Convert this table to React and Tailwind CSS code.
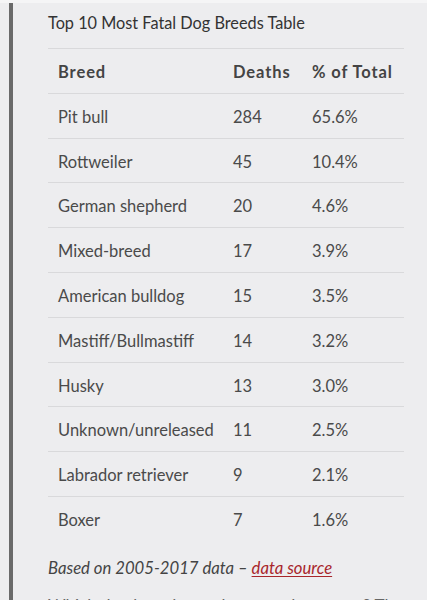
import React from 'react';

const rows = [
    ['Pit bull', '284', '65.6%'],
    ['Rottweiler', '45', '10.4%'],
    ['German shepherd', '20', '4.6%'],
    ['Mixed-breed', '17', '3.9%'],
    ['American bulldog', '15', '3.5%'],
    ['Mastiff/Bullmastiff', '14', '3.2%'],
    ['Husky', '13', '3.0%'],
    ['Unknown/unreleased', '11', '2.5%'],
    ['Labrador retriever', '9', '2.1%'],
    ['Boxer', '7', '1.6%'],
];

export default function App() {
    return (
        <div className="min-h-screen bg-[#ededef] font-['Lato',sans-serif] text-[#4a4a4a]">
            <div className="h-[3px] bg-[#f5f5f6]" />
            <div className="ml-[9px] border-l-4 border-[#6a6a6a] pl-[35px] pr-[23px] pt-[8px] pb-8">
                <h3 className="text-[16.3px] leading-[24px] text-[#333]">Top 10 Most Fatal Dog Breeds Table</h3>
                <table className="mt-[13px] w-full border-collapse text-[16.5px]">
                    <thead>
                        <tr className="border-t border-[#d9d9db]">
                            <th className="h-[44.8px] w-[175px] pl-[10px] pt-[2px] text-left font-bold tracking-[0.9px] text-[#444]">Breed</th>
                            <th className="w-[79px] pl-[10px] pt-[2px] text-left font-bold tracking-[0.9px] text-[#444]">Deaths</th>
                            <th className="pl-[10px] pt-[2px] text-left font-bold tracking-[0.9px] text-[#444]">% of Total</th>
                        </tr>
                    </thead>
                    <tbody>
                        {rows.map(([breed, deaths, pct]) => (
                            <tr key={breed} className="border-t border-[#d9d9db]">
                                <td className="h-[44.8px] pl-[10px] pt-[3px]">{breed}</td>
                                <td className="pl-[10px] pt-[3px]">{deaths}</td>
                                <td className="pl-[10px] pt-[3px]">{pct}</td>
                            </tr>
                        ))}
                    </tbody>
                </table>
                <p className="mt-[15px] text-[16.7px] italic text-[#444]">
                    Based on 2005-2017 data –{' '}
                    <a href="#" className="text-[#a8262b] underline underline-offset-2">data source</a>
                </p>
                <p className="mt-[12px] text-[17px] text-[#666]">
                    Which dog breeds are the most dangerous? The numbers above show the breeds.
                </p>
            </div>
        </div>
    );
}
